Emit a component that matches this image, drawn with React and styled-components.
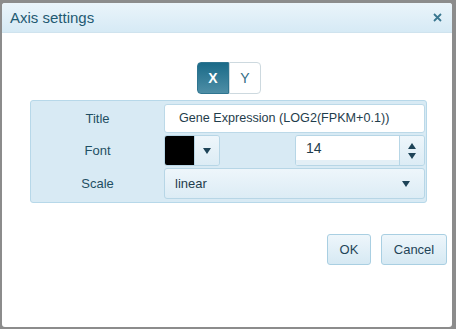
import React, { useState } from "react";
import styled, { createGlobalStyle } from "styled-components";

const Global = createGlobalStyle`
  body {
    margin: 0;
    background: #8c8c8c;
    font-family: "Liberation Sans", Arial, sans-serif;
  }
`;

function App() {
  const [axis, setAxis] = useState("X");

  return (
    <>
      <Global />
      <Dialog>
        <Header>
          <HeaderTitle>Axis settings</HeaderTitle>
          <Close aria-label="close">
            <svg width="9" height="9" viewBox="0 0 9 9">
              <path d="M1 1L8 8M8 1L1 8" stroke="#3a7790" strokeWidth="1.8" />
            </svg>
          </Close>
        </Header>
        <Body>
          <Toggle>
            <ToggleButton active={axis === "X"} left onClick={() => setAxis("X")}>
              X
            </ToggleButton>
            <ToggleButton active={axis === "Y"} onClick={() => setAxis("Y")}>
              Y
            </ToggleButton>
          </Toggle>
          <Panel>
            <Row>
              <Label>Title</Label>
              <TextInput defaultValue="Gene Expression (LOG2(FPKM+0.1))" />
            </Row>
            <Row>
              <Label>Font</Label>
              <Field>
                <ColorPicker>
                  <Swatch color="#000" />
                  <ArrowButton>
                    <Caret />
                  </ArrowButton>
                </ColorPicker>
                <Spinner>
                  <NumberInput defaultValue="14" />
                  <SpinButtons>
                    <Caret up />
                    <Caret />
                  </SpinButtons>
                </Spinner>
              </Field>
            </Row>
            <Row>
              <Label>Scale</Label>
              <Select>
                <span>linear</span>
                <Caret />
              </Select>
            </Row>
          </Panel>
          <Footer>
            <Button wide={false}>OK</Button>
            <Button wide>Cancel</Button>
          </Footer>
        </Body>
      </Dialog>
    </>
  );
}

const Dialog = styled.div`
  margin: 3px 0 0 2px;
  width: 450px;
  height: 324px;
  background: #fff;
  border-radius: 3px;
  overflow: hidden;
  display: flex;
  flex-direction: column;
`;

const Header = styled.div`
  height: 29px;
  display: flex;
  align-items: center;
  justify-content: space-between;
  padding: 0 10px 0 8px;
  background: linear-gradient(#eaf4fa, #d6eaf5);
  border-bottom: 1px solid #cfe3ee;
`;

const HeaderTitle = styled.span`
  font-size: 15px;
  color: #1f5a72;
`;

const Close = styled.span`
  display: flex;
`;

const Body = styled.div`
  display: flex;
  flex-direction: column;
  padding-top: 29px;
`;

const Toggle = styled.div`
  display: flex;
  align-self: center;
  margin-left: 4px;
`;

const ToggleButton = styled.button`
  width: 32px;
  height: 32px;
  font-family: inherit;
  font-size: 14px;
  border: 1px solid ${(p) => (p.active ? "#2f7590" : "#cdd9df")};
  border-radius: ${(p) => (p.left ? "4px 0 0 4px" : "0 4px 4px 0")};
  background: ${(p) =>
    p.active ? "linear-gradient(#1a6a88, #4e8ea6)" : "#fff"};
  color: ${(p) => (p.active ? "#fff" : "#336d85")};
  font-weight: ${(p) => (p.active ? "bold" : "normal")};
  padding: 0;
`;

const Panel = styled.div`
  margin: 6px 0 0 28px;
  width: 394px;
  padding: 2px 1px 3px 0;
  background: #d8eaf4;
  border: 1px solid #b7d8e9;
  border-radius: 3px;
  display: flex;
  flex-direction: column;
  gap: 2px;
`;

const Row = styled.div`
  display: flex;
  align-items: center;
  min-height: 30px;
`;

const Label = styled.div`
  width: 133px;
  text-align: center;
  font-size: 13px;
  color: #1f4f63;
`;

const TextInput = styled.input`
  flex: 1;
  height: 29px;
  box-sizing: border-box;
  border: 1px solid #bcd9e8;
  border-radius: 3px;
  padding: 0 14px;
  font-family: inherit;
  font-size: 12.6px;
  color: #1f3d4c;
  background: #fff;
  outline: none;
`;

const Field = styled.div`
  flex: 1;
  display: flex;
  justify-content: space-between;
  align-items: center;
`;

const ColorPicker = styled.div`
  display: flex;
  height: 31px;
  border: 1px solid #b7d6e6;
  border-radius: 3px;
  overflow: hidden;
  box-sizing: border-box;
`;

const Swatch = styled.div`
  width: 29px;
  background: ${(p) => p.color};
`;

const ArrowButton = styled.div`
  width: 24px;
  display: flex;
  align-items: center;
  justify-content: center;
  background: linear-gradient(#eef6fb, #dcecf5);
  border-left: 1px solid #b7d6e6;
`;

const Caret = styled.span`
  width: 0;
  height: 0;
  border-left: 4px solid transparent;
  border-right: 4px solid transparent;
  ${(p) =>
    p.up ? "border-bottom: 6px solid #1e4458;" : "border-top: 6px solid #1e4458;"}
`;

const Spinner = styled.div`
  display: flex;
  width: 130px;
  height: 31px;
  box-sizing: border-box;
  border: 1px solid #b7d6e6;
  border-radius: 3px;
  overflow: hidden;
`;

const NumberInput = styled.input`
  flex: 1;
  min-width: 0;
  border: none;
  border-bottom: 5px solid #e3eff6;
  padding: 0 10px;
  font-family: inherit;
  font-size: 14px;
  color: #1f3d4c;
  outline: none;
`;

const SpinButtons = styled.div`
  width: 24px;
  display: flex;
  flex-direction: column;
  align-items: center;
  justify-content: center;
  gap: 4px;
  border-left: 1px solid #b7d6e6;
  background: linear-gradient(#eef6fb, #dcecf5);
`;

const Select = styled.div`
  flex: 1;
  height: 31px;
  box-sizing: border-box;
  display: flex;
  align-items: center;
  justify-content: space-between;
  padding: 0 14px 0 10px;
  border: 1px solid #b7d6e6;
  border-radius: 3px;
  background: linear-gradient(#eef6fb, #dcecf5);
  font-size: 13px;
  color: #1f3d4c;
`;

const Footer = styled.div`
  display: flex;
  justify-content: flex-end;
  gap: 10px;
  padding: 31px 5px 0 0;
`;

const Button = styled.button`
  width: ${(p) => (p.wide ? "66px" : "44px")};
  height: 31px;
  font-family: inherit;
  font-size: 13px;
  color: #1f4558;
  border: 1px solid #a9cfe2;
  border-radius: 3px;
  background: linear-gradient(#eef6fb, #d6e9f3);
  padding: 0;
`;

export default App;
